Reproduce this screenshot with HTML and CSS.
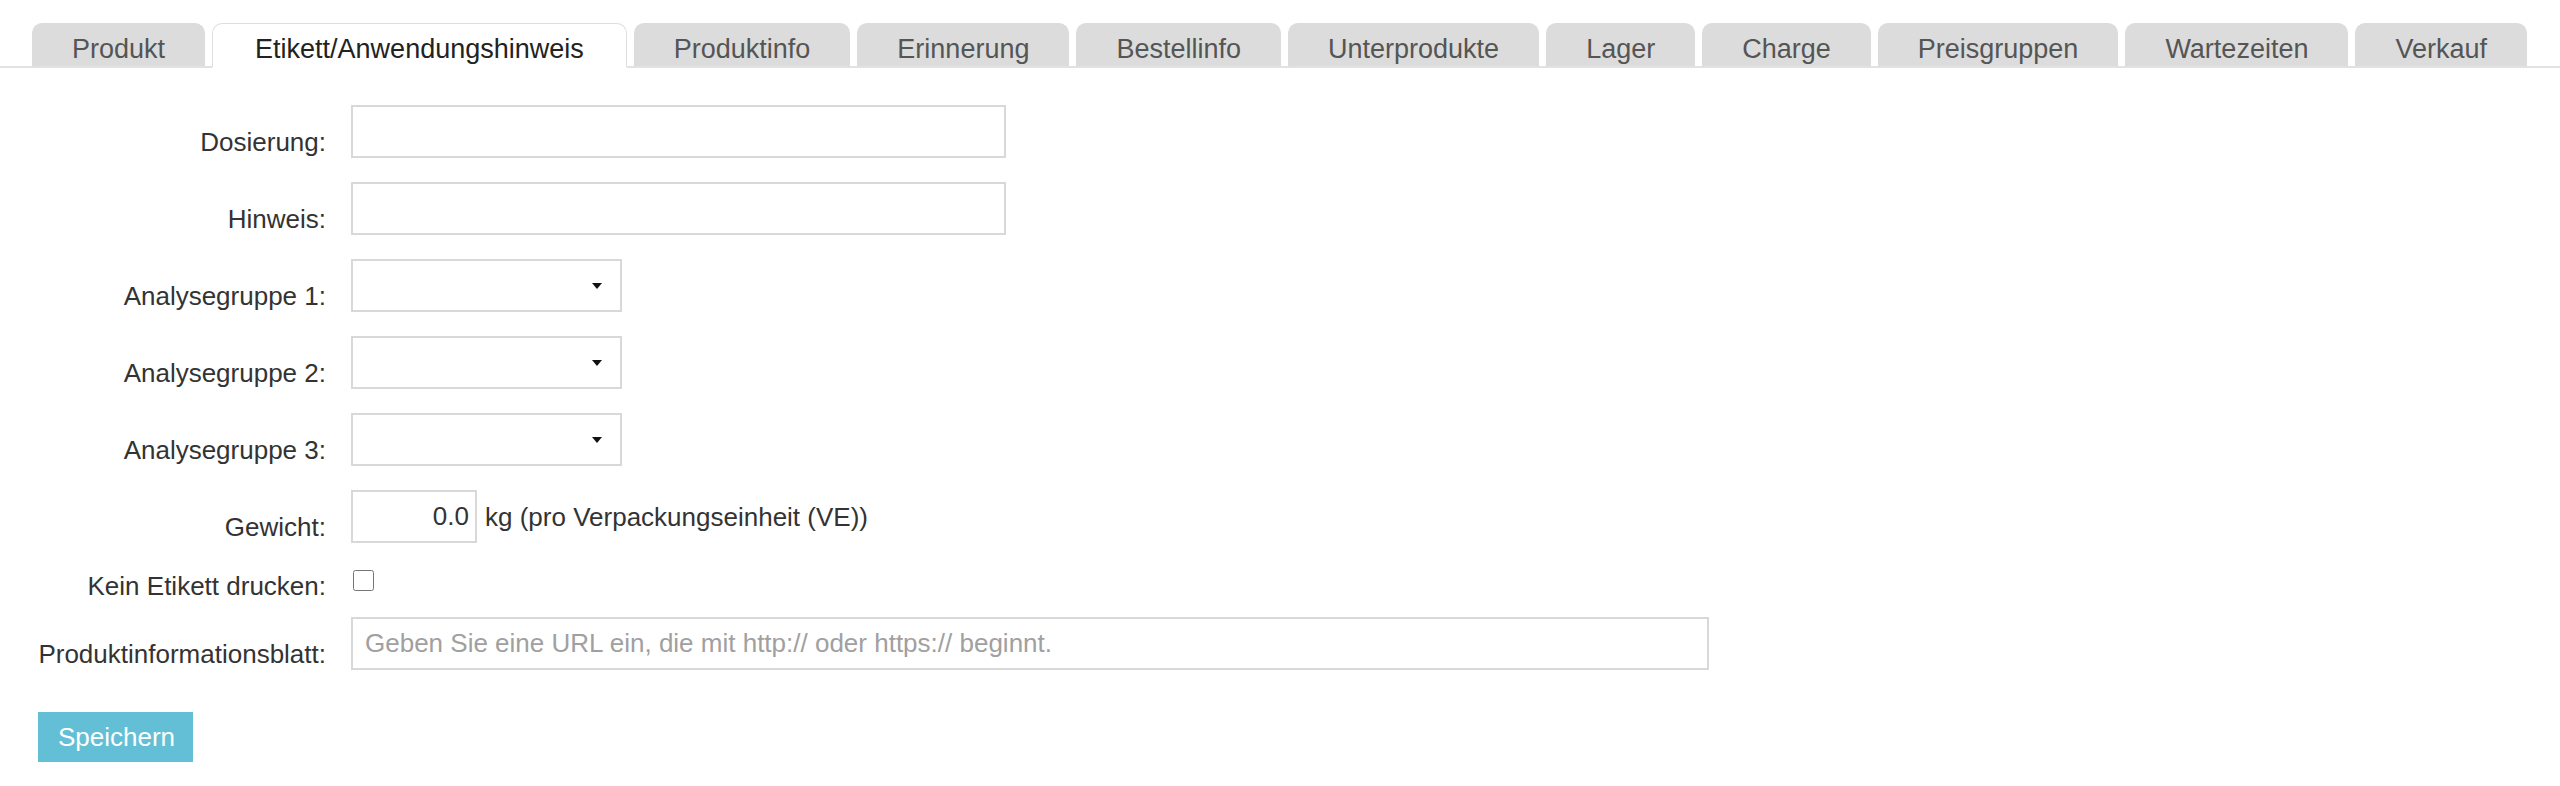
FILE: index.html
```html
<!DOCTYPE html>
<html lang="de">
<head>
<meta charset="utf-8">
<title>Etikett/Anwendungshinweis</title>
<link rel="stylesheet" href="styles.css">
</head>
<body>
<nav class="tabs">
  <a class="tab">Produkt</a>
  <a class="tab active">Etikett/Anwendungshinweis</a>
  <a class="tab">Produktinfo</a>
  <a class="tab">Erinnerung</a>
  <a class="tab">Bestellinfo</a>
  <a class="tab">Unterprodukte</a>
  <a class="tab">Lager</a>
  <a class="tab">Charge</a>
  <a class="tab">Preisgruppen</a>
  <a class="tab">Wartezeiten</a>
  <a class="tab">Verkauf</a>
</nav>
<form class="form">
  <div class="row">
    <label class="label">Dosierung:</label>
    <div class="control"><input class="input wide" type="text"></div>
  </div>
  <div class="row">
    <label class="label">Hinweis:</label>
    <div class="control"><input class="input wide" type="text"></div>
  </div>
  <div class="row">
    <label class="label">Analysegruppe 1:</label>
    <div class="control"><div class="select"><span class="caret"></span></div></div>
  </div>
  <div class="row">
    <label class="label">Analysegruppe 2:</label>
    <div class="control"><div class="select"><span class="caret"></span></div></div>
  </div>
  <div class="row">
    <label class="label">Analysegruppe 3:</label>
    <div class="control"><div class="select"><span class="caret"></span></div></div>
  </div>
  <div class="row">
    <label class="label">Gewicht:</label>
    <div class="control inline">
      <input class="input weight" type="text" value="0.0">
      <span class="unit">kg (pro Verpackungseinheit (VE))</span>
    </div>
  </div>
  <div class="row check-row">
    <label class="label">Kein Etikett drucken:</label>
    <div class="control"><input class="checkbox" type="checkbox"></div>
  </div>
  <div class="row">
    <label class="label">Produktinformationsblatt:</label>
    <div class="control"><input class="input url" type="text" placeholder="Geben Sie eine URL ein, die mit http:// oder https:// beginnt."></div>
  </div>
  <div class="actions">
    <button class="btn" type="button">Speichern</button>
  </div>
</form>
</body>
</html>
```

FILE: styles.css
```css
html, body {
  margin: 0;
  padding: 0;
  background: #fff;
}
body {
  font-family: "Liberation Sans", Arial, sans-serif;
  color: #333;
}

.tabs {
  display: flex;
  align-items: flex-end;
  gap: 7px;
  padding: 23px 0 0 32px;
  border-bottom: 2px solid #e2e2e2;
  height: 43px;
}
.tab {
  box-sizing: border-box;
  height: 45px;
  margin-bottom: -2px;
  padding: 10px 39px 0;
  border: 1px solid #dcdcdc;
  border-bottom: 2px solid #e2e2e2;
  border-radius: 10px 10px 0 0;
  background: #dcdcdc;
  color: #555;
  font-size: 27px;
  line-height: 31px;
  white-space: nowrap;
}
.tab.active {
  padding: 10px 42px 0;
  background: #fff;
  color: #222;
  border-color: #dedede;
  border-bottom-color: #fff;
}

.form {
  padding-top: 37px;
}
.row {
  display: grid;
  grid-template-columns: 326px 1fr;
  column-gap: 25px;
  margin-bottom: 24px;
}
.label {
  text-align: right;
  font-size: 26px;
  line-height: 30px;
  padding-top: 22px;
  white-space: nowrap;
}
.control {
  display: flex;
  align-items: center;
}
.input {
  box-sizing: border-box;
  height: 53px;
  border: 2px solid #d8d8d8;
  border-radius: 0;
  padding: 0 12px;
  font-family: "Liberation Sans", Arial, sans-serif;
  font-size: 26px;
  color: #333;
  outline: none;
}
.input.wide {
  width: 655px;
}
.input.weight {
  width: 126px;
  text-align: right;
  padding-right: 6px;
}
.input.url {
  width: 1358px;
}
.input::placeholder {
  color: #a0a0a0;
}
.unit {
  font-size: 26px;
  margin-left: 8px;
  padding-top: 2px;
}

.select {
  box-sizing: border-box;
  width: 271px;
  height: 53px;
  border: 2px solid #d8d8d8;
  display: flex;
  align-items: center;
  justify-content: flex-end;
  padding-right: 18px;
}
.caret {
  width: 0;
  height: 0;
  border-left: 5px solid transparent;
  border-right: 5px solid transparent;
  border-top: 6px solid #111;
}

.check-row {
  margin-bottom: 16px;
}
.check-row .label {
  padding-top: 4px;
}
.check-row .control {
  align-items: flex-start;
  height: 26px;
}
.checkbox {
  width: 21px;
  height: 21px;
  margin: 3px 0 0 2px;
}

.actions {
  padding: 18px 0 0 38px;
}
.btn {
  box-sizing: border-box;
  height: 50px;
  padding: 0 20px;
  border: none;
  border-radius: 0;
  background: #63bfd6;
  color: #fff;
  font-family: "Liberation Sans", Arial, sans-serif;
  font-size: 26px;
  width: 155px;
}
```
